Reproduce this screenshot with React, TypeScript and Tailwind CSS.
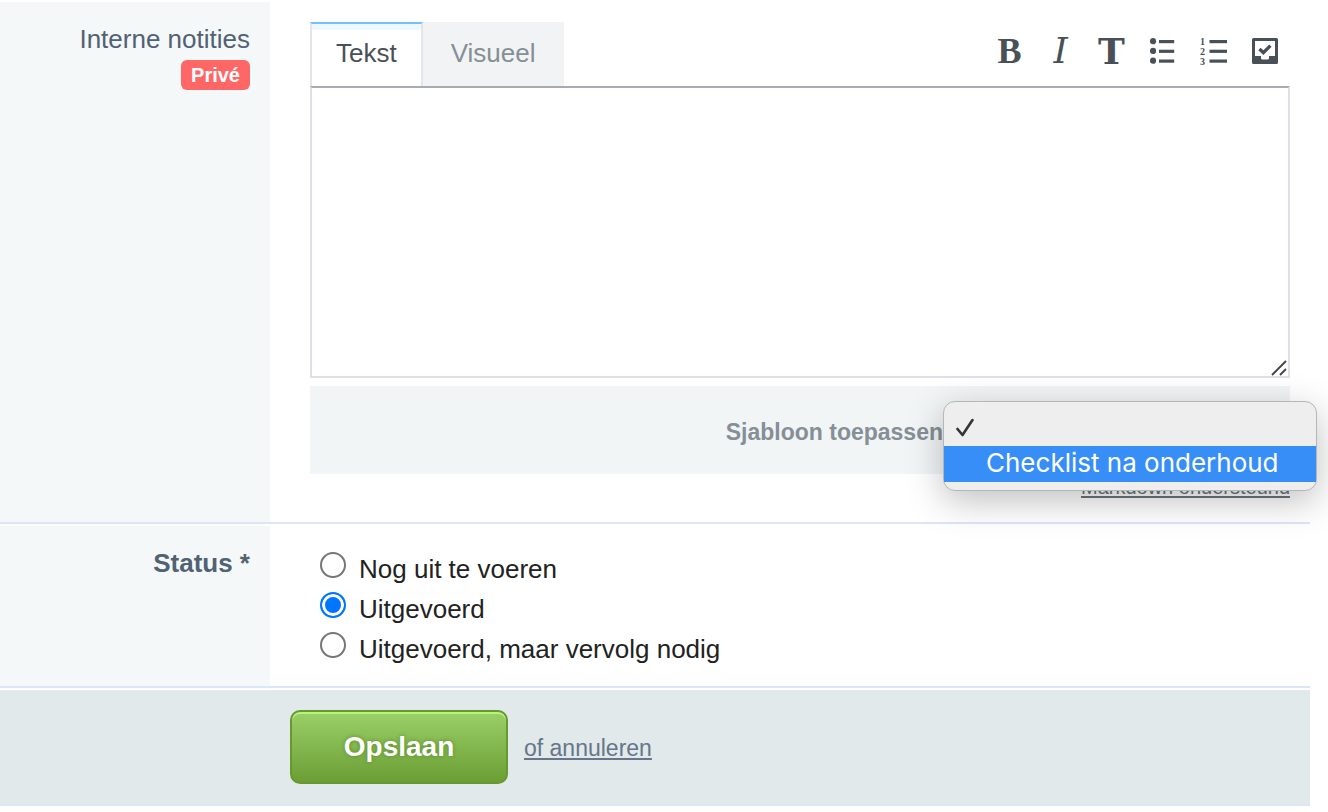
import { useState } from 'react';
import type { ReactNode } from 'react';

const STATUSES = ['Nog uit te voeren', 'Uitgevoerd', 'Uitgevoerd, maar vervolg nodig'];

function BulletListIcon() {
  return (
    <svg width="26" height="26" viewBox="0 0 26 26" fill="currentColor">
      {[3.2, 12.9, 22.7].map((y) => (
        <g key={y}>
          <circle cx="3" cy={y} r="3.1" />
          <rect x="9" y={y - 1.2} width="15.2" height="3.2" />
        </g>
      ))}
    </svg>
  );
}

function NumberListIcon() {
  return (
    <svg width="28" height="38" viewBox="0 -6 28 38" fill="currentColor">
      {[3.2, 12.9, 22.7].map((y, i) => (
        <g key={y}>
          <text x="0" y={y + 4} fontSize="10" fontWeight="700" fontFamily="Liberation Serif, serif">
            {i + 1}
          </text>
          <rect x="9.5" y={y - 1.2} width="17.5" height="3.2" />
        </g>
      ))}
    </svg>
  );
}

function ChecklistIcon() {
  return (
    <svg width="26" height="26" viewBox="0 0 26 26" fill="currentColor">
      <path
        fillRule="evenodd"
        d="M1.5 0H24.5Q26 0 26 1.5V24.5Q26 26 24.5 26H1.5Q0 26 0 24.5V1.5Q0 0 1.5 0ZM3 3V18H9V20Q9 21.5 10.5 21.5H15.5Q17 21.5 17 20V18H23V3Z"
      />
      <path d="M7.4 11L11.4 14.6L18.4 7.6" fill="none" stroke="currentColor" strokeWidth="3.4" />
    </svg>
  );
}

interface Tool {
  label: string;
  icon: ReactNode;
}

const TOOLS: Tool[] = [
  {
    label: 'Vet',
    icon: <span className="font-['Liberation_Serif',serif] text-4xl leading-8 font-bold">B</span>,
  },
  {
    label: 'Cursief',
    icon: <span className="font-['DejaVu_Serif',serif] text-4xl leading-8 italic">I</span>,
  },
  {
    label: 'Kop',
    icon: <span className="font-['DejaVu_Serif',serif] text-4xl leading-8 font-bold">T</span>,
  },
  { label: 'Opsomming', icon: <BulletListIcon /> },
  { label: 'Genummerde lijst', icon: <NumberListIcon /> },
  { label: 'Checklist', icon: <ChecklistIcon /> },
];

function Toolbar() {
  return (
    <div className="flex h-[58px] items-center">
      {TOOLS.map((t) => (
        <button
          key={t.label}
          type="button"
          aria-label={t.label}
          className="flex h-8 w-[51px] items-center justify-center text-[#495057]"
        >
          {t.icon}
        </button>
      ))}
    </div>
  );
}

function TemplateMenu() {
  return (
    <div
      role="listbox"
      aria-label="Sjablonen"
      className="absolute -top-[11px] left-0 z-10 w-[374px] rounded-xl border border-[#b4b6b7] bg-[#eeeeee] pt-2 pb-2 font-[Inter,sans-serif] shadow-[0_10px_36px_rgba(0,0,0,0.25)]"
    >
      <div role="option" aria-selected="true" className="flex h-9 items-center pl-3">
        <svg width="18" height="20" viewBox="0 0 18 20" className="text-[#333333]">
          <path
            d="M1.5 11L6.5 17L16.5 2"
            fill="none"
            stroke="currentColor"
            strokeWidth="2.6"
            strokeLinecap="round"
            strokeLinejoin="round"
          />
        </svg>
      </div>
      <div
        role="option"
        aria-selected="false"
        className="flex h-9 items-center bg-[#388ef7] pb-1 pl-[42px] text-[26px] text-white"
      >
        Checklist na onderhoud
      </div>
    </div>
  );
}

function NotesEditor() {
  const [tab, setTab] = useState('Tekst');
  const [notes, setNotes] = useState('');

  return (
    <div>
      <div className="flex items-start justify-between">
        <div className="flex h-16">
          {['Tekst', 'Visueel'].map((name) => (
            <button
              key={name}
              type="button"
              onClick={() => setTab(name)}
              className={
                tab === name
                  ? 'border-x-2 border-t-2 border-x-[#e4e5e8] border-t-[#74c0fc] bg-white px-6 pb-1 text-[26px] text-[#495057] shadow-[inset_0_6px_0_#f0f8ff]'
                  : 'bg-[#f1f3f5] px-7 pb-[2px] text-[26px] text-[#868e96]'
              }
            >
              {name}
            </button>
          ))}
        </div>
        <Toolbar />
      </div>
      <div className="relative">
        <textarea
          id="notes"
          value={notes}
          onChange={(e) => setNotes(e.target.value)}
          className="block h-[292px] w-full resize-y border-2 border-[#dee0e8] border-t-[#a9aab2] bg-white p-3 text-[26px] outline-none [&::-webkit-resizer]:hidden"
        />
        <svg
          width="16"
          height="16"
          viewBox="0 0 16 16"
          className="pointer-events-none absolute right-[3px] bottom-[2px] text-[#444444]"
        >
          <path d="M1 15L15 1M9 15L15 9" stroke="currentColor" strokeWidth="1.8" />
        </svg>
      </div>
    </div>
  );
}

function StatusField() {
  const [status, setStatus] = useState('Uitgevoerd');

  return (
    <div role="radiogroup" aria-labelledby="status-label" className="flex flex-col px-[50px] pt-5">
      {STATUSES.map((name) => (
        <label key={name} className="flex h-10 items-start gap-[13px] text-[26px] leading-[46px] text-[#222222]">
          <input
            type="radio"
            name="status"
            checked={status === name}
            onChange={() => setStatus(name)}
            className="mt-[6px] size-[26px] appearance-none rounded-full border-2 border-[#767676] bg-white checked:border-[#0075ff] checked:bg-[#0075ff] checked:shadow-[inset_0_0_0_3px_#ffffff]"
          />
          {name}
        </label>
      ))}
    </div>
  );
}

export default function App() {
  return (
    <form
      onSubmit={(e) => e.preventDefault()}
      className="mr-[18px] flex flex-col gap-[2px] bg-white pt-[2px] font-['Liberation_Sans',Arial,sans-serif]"
    >
      <div className="flex border-b-2 border-[#dce6f4]">
        <div className="flex w-[270px] shrink-0 flex-col items-end bg-[#f4f8f9] pt-4 pr-5">
          <label htmlFor="notes" className="text-[26px] leading-[42px] text-[#526173]">
            Interne notities
          </label>
          <span className="rounded-md bg-[#ff6666] px-[10px] text-xl leading-[30px] font-bold text-white">
            Privé
          </span>
        </div>
        <div className="min-w-0 grow pt-5 pr-5 pb-5 pl-10">
          <NotesEditor />
          <div className="mt-2 flex h-[88px] items-center justify-end bg-[#f1f5f6]">
            <label htmlFor="template" className="pt-1 text-[23px] font-bold text-[#868e96]">
              Sjabloon toepassen
            </label>
            <div className="relative w-[347px] pl-3">
              <select id="template" className="h-9 w-[315px] rounded-md border border-[#c4c8cc] bg-white text-xl">
                <option value="" />
                <option>Checklist na onderhoud</option>
              </select>
              <TemplateMenu />
            </div>
          </div>
          <div className="flex h-7 justify-end">
            <a href="#" className="text-xl leading-[26px] text-[#6c757d] underline decoration-2 underline-offset-2">
              Markdown ondersteund
            </a>
          </div>
        </div>
      </div>

      <div className="flex h-[162px] border-b-2 border-[#dce6f4]">
        <div className="w-[270px] shrink-0 bg-[#f4f8f9] pt-4 pr-5 text-right">
          <span id="status-label" className="text-[26px] leading-[42px] font-bold text-[#526173]">
            Status *
          </span>
        </div>
        <StatusField />
      </div>

      <div className="flex items-center gap-4 border-b-2 border-[#dce6f4] bg-[#e1e9eb] py-5 pl-[290px]">
        <button
          type="submit"
          className="h-[74px] w-[218px] rounded-[10px] border-2 border-[#67992f] bg-linear-to-b from-[#9bd068] to-[#6b9f34] text-[28px] font-bold text-white shadow-[inset_0_2px_0_#b8f47c] text-shadow-[0_0_4px_#5b8a2b]"
        >
          Opslaan
        </button>
        <a href="#" className="pt-[2px] text-[23px] text-[#66758a] underline decoration-2 underline-offset-2">
          of annuleren
        </a>
      </div>
    </form>
  );
}
